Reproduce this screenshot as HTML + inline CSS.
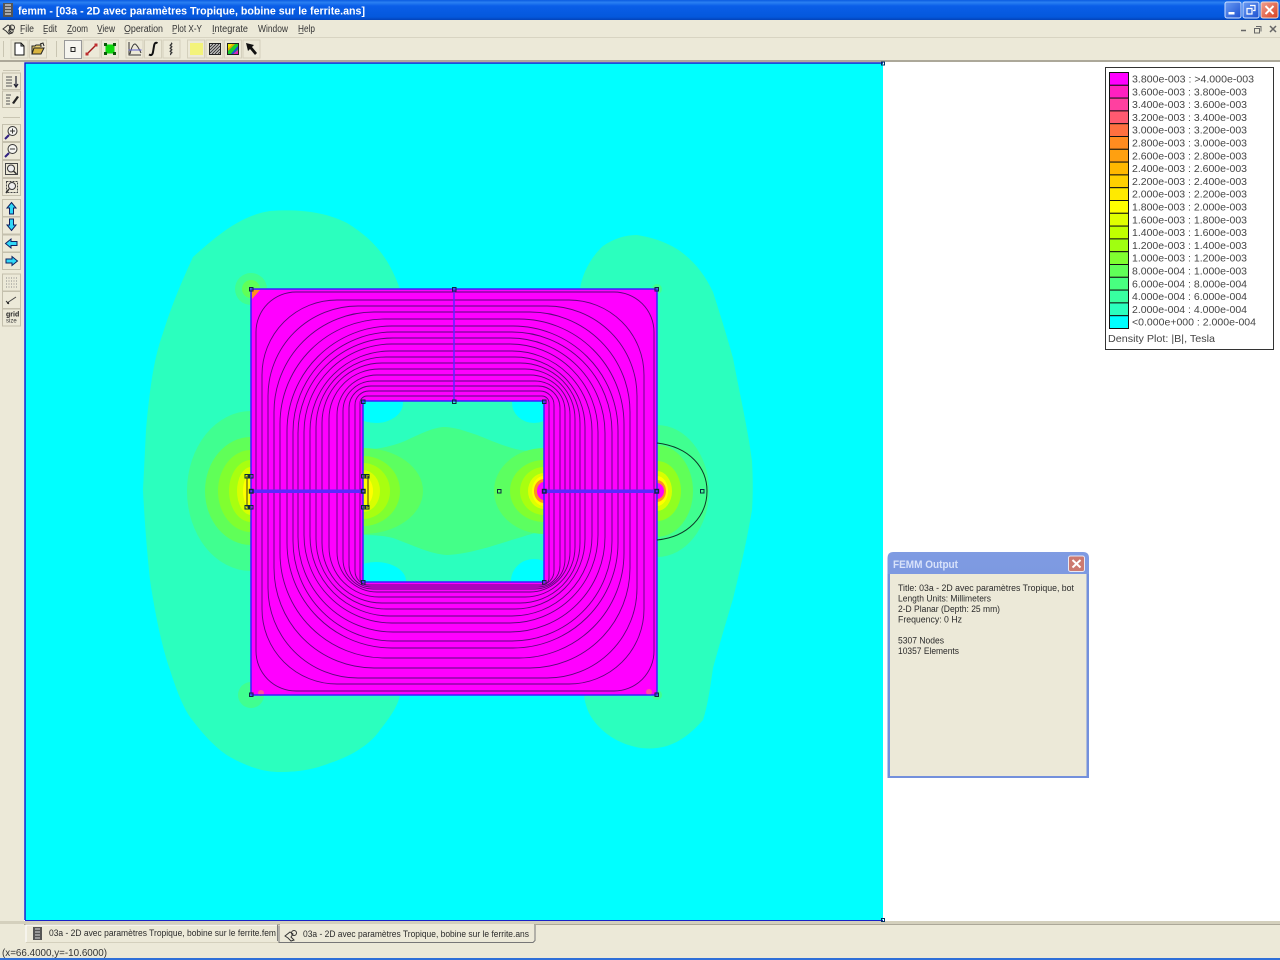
<!DOCTYPE html>
<html><head><meta charset="utf-8"><title>femm</title>
<style>
html,body{margin:0;padding:0;background:#ece9d8;width:1280px;height:960px;overflow:hidden}
svg{display:block;position:absolute;left:0;top:0}
text{font-family:"Liberation Sans",sans-serif;white-space:pre}
.m{font-size:10px;fill:#333}
.l{font-size:10.5px;fill:#444}
.o{font-size:9.6px;fill:#2a2a2a}
.t{font-size:9.6px;fill:#2a2a2a}
.b{fill:#ece9d8;stroke:#b8b4a2;stroke-width:1}
</style></head><body>
<svg width="1280" height="960" viewBox="0 0 1280 960" xmlns="http://www.w3.org/2000/svg">
<defs>
<linearGradient id="tb" x1="0" y1="0" x2="0" y2="1"><stop offset="0" stop-color="#0a5be0"/><stop offset=".12" stop-color="#2a80f2"/><stop offset=".3" stop-color="#0a5ee8"/><stop offset=".85" stop-color="#0458dc"/><stop offset="1" stop-color="#0342b8"/></linearGradient>
<linearGradient id="ot" x1="0" y1="0" x2="0" y2="1"><stop offset="0" stop-color="#7f9be2"/><stop offset=".5" stop-color="#7390dc"/><stop offset="1" stop-color="#6a86d4"/></linearGradient>
<linearGradient id="rd" x1="0" y1="0" x2="1" y2="1"><stop offset="0" stop-color="#f0a090"/><stop offset="1" stop-color="#d84020"/></linearGradient>
<linearGradient id="bl" x1="0" y1="0" x2="1" y2="1"><stop offset="0" stop-color="#6a9cf4"/><stop offset="1" stop-color="#1c50d0"/></linearGradient>
<clipPath id="view"><rect x="25" y="63" width="858" height="857"/></clipPath>
<clipPath id="win"><rect x="363" y="401" width="181" height="181"/></clipPath>
</defs>

<!-- Title bar -->
<rect x="0" y="0" width="1280" height="20" fill="url(#tb)"/>
<rect x="3" y="3" width="10" height="14" fill="#555"/>
<path d="M5 5h6M5 8h6M5 11h6M5 14h6" stroke="#ddd" stroke-width="1.2"/>
<text x="18" y="14.500" font-size="11" font-weight="700" fill="#fff" textLength="347" lengthAdjust="spacingAndGlyphs">femm - [03a - 2D avec paramètres Tropique, bobine sur le ferrite.ans]</text>
<rect x="1225" y="2" width="16" height="16" rx="2" fill="url(#bl)" stroke="#cfe0ff"/>
<rect x="1228.500" y="12" width="6" height="2.500" fill="#fff"/>
<rect x="1243" y="2" width="16" height="16" rx="2" fill="url(#bl)" stroke="#cfe0ff"/>
<path d="M1250 5.500h5v5h-2M1247 8.500h5v5.500h-5z" fill="none" stroke="#fff" stroke-width="1.2"/>
<rect x="1261" y="2" width="17" height="16" rx="2" fill="url(#rd)" stroke="#f4d8cc"/>
<path d="M1265.500 6l8 8M1273.500 6l-8 8" stroke="#fff" stroke-width="2"/>

<!-- Menu bar -->
<rect x="0" y="20" width="1280" height="17" fill="#ece9d8"/>
<rect x="0" y="37" width="1280" height="1" fill="#d8d4c2"/>
<g fill="none" stroke="#333" stroke-width="1">
<path d="M3 29l5-4 3 2-2 3 3 3-3 1-3-3z"/><circle cx="12" cy="27.500" r="2.500"/><circle cx="11" cy="31" r="2.200"/>
</g>
<text class="m" x="20" y="32" textLength="14" lengthAdjust="spacingAndGlyphs">File</text>
<text class="m" x="43" y="32" textLength="14" lengthAdjust="spacingAndGlyphs">Edit</text>
<text class="m" x="67" y="32" textLength="21" lengthAdjust="spacingAndGlyphs">Zoom</text>
<text class="m" x="97" y="32" textLength="18" lengthAdjust="spacingAndGlyphs">View</text>
<text class="m" x="124" y="32" textLength="39" lengthAdjust="spacingAndGlyphs">Operation</text>
<text class="m" x="172" y="32" textLength="30" lengthAdjust="spacingAndGlyphs">Plot X-Y</text>
<text class="m" x="212" y="32" textLength="36" lengthAdjust="spacingAndGlyphs">Integrate</text>
<text class="m" x="258" y="32" textLength="30" lengthAdjust="spacingAndGlyphs">Window</text>
<text class="m" x="298" y="32" textLength="17" lengthAdjust="spacingAndGlyphs">Help</text>
<path d="M20.500 33.500h3M43.500 33.500h3M67.500 33.500h5M97.500 33.500h5M124.500 33.500h5M172.500 33.500h4M212.500 33.500h2M298.500 33.500h5" stroke="#444" stroke-width=".8"/>
<path d="M1241 30.500h5" stroke="#666" stroke-width="1.500"/>
<path d="M1256 26.500h5v5M1254.500 28.500h5v4.500h-5z" fill="none" stroke="#666"/>
<path d="M1270 26l6 6M1276 26l-6 6" stroke="#666" stroke-width="1.500"/>

<!-- Toolbar -->
<rect x="0" y="38" width="1280" height="22" fill="#ece9d8"/>
<rect x="0" y="60" width="1280" height="2" fill="#aca899"/>
<path d="M3.500 41v16M56.500 41v16" stroke="#c9c5b2"/>
<g>
<rect x="11" y="40" width="17" height="18" class="b" style="stroke:#d4d0bd"/>
<path d="M15 43h6l3 3v9h-9z" fill="#fff" stroke="#111"/><path d="M21 43v3h3" fill="none" stroke="#111"/>
<rect x="29.500" y="40" width="17" height="18" class="b" style="stroke:#d4d0bd"/>
<path d="M32 54v-8h3l1-1h5v2" fill="#e8d070" stroke="#222"/><path d="M32 54l2-6h10l-3 6z" fill="#d8b440" stroke="#222"/><path d="M40 44l3-1 1 3" fill="none" stroke="#222"/>
<rect x="64.500" y="40.500" width="17" height="18" fill="#f5f4ee" stroke="#999"/>
<rect x="71" y="47.500" width="4" height="4" fill="none" stroke="#222"/>
<rect x="83" y="40" width="17" height="18" class="b" style="stroke:#d4d0bd"/>
<path d="M87 54l9-9" stroke="#a01818" stroke-width="1.400"/><rect x="85.500" y="52.500" width="3" height="3" fill="#c03030"/><rect x="94.500" y="43.500" width="3" height="3" fill="#c03030"/>
<rect x="101.500" y="40" width="17" height="18" class="b" style="stroke:#d4d0bd"/>
<rect x="105.500" y="44.500" width="9" height="9" fill="#10d810"/>
<path d="M104 43h3v3h-3zM113 43h3v3h-3zM104 52h3v3h-3zM113 52h3v3h-3z" fill="#0b5a0b"/>
<rect x="126" y="40" width="17" height="18" class="b" style="stroke:#d4d0bd"/>
<path d="M129 42v13h12M130 54c2-9 4-10 5-10s4 4 6 9" fill="none" stroke="#333"/>
<path d="M128.500 50h13" stroke="#6060d0"/>
<rect x="144.500" y="40" width="17" height="18" class="b" style="stroke:#d4d0bd"/>
<path d="M149 54.500c2 1.200 3.500.5 4-2.500l1.200-7c.4-2 1.600-2.800 3.300-1.800" fill="none" stroke="#111" stroke-width="2"/>
<rect x="163" y="40" width="17" height="18" class="b" style="stroke:#d4d0bd"/>
<path d="M171 43c3 1-3 2 0 3s-3 2 0 3 -3 2 0 3 -2 1 0 3" fill="none" stroke="#333" stroke-width="1.200"/>
<rect x="187.500" y="40" width="17" height="18" class="b" style="stroke:#d4d0bd"/>
<rect x="190" y="43" width="13" height="12" fill="#f3f37a"/>
<rect x="206" y="40" width="17" height="18" class="b" style="stroke:#d4d0bd"/>
<rect x="209.500" y="43.500" width="11" height="11" fill="#ccc" stroke="#222"/>
<path d="M210 47l3-3M210 50l6-6M210 53l9-9M212 54l8-8M215 54l5-5M218 54l2-2" stroke="#333" stroke-width=".9"/>
<rect x="224.500" y="40" width="17" height="18" class="b" style="stroke:#d4d0bd"/>
<rect x="227.500" y="43.500" width="11" height="11" fill="#18d030" stroke="#222"/>
<path d="M228 44h5l-5 5z" fill="#e8e800"/><path d="M228 49l5-5 2 0-7 7z" fill="#f0a000"/><path d="M238 50v4h-5z" fill="#e020c0"/><path d="M238 46v3l-5 5h-2z" fill="#2040e0"/>
<rect x="243" y="40" width="17" height="18" class="b" style="stroke:#d4d0bd"/>
<path d="M246 43l8 2-2 2 5 6-2 2-5-6-2 2z" fill="#111"/>
</g>

<!-- Left toolbar -->
<rect x="0" y="62" width="24" height="860" fill="#ece9d8"/>
<path d="M3 70.500h17M3 117.500h17" stroke="#c9c5b2"/>
<g>
<rect x="2.500" y="73" width="18" height="16.500" class="b" style="stroke:#c4c0ad"/>
<path d="M6 77h6M6 80h6M6 83h6M6 86h6" stroke="#555"/><path d="M16 76v10M14 84l2 3 2-3" fill="none" stroke="#223" stroke-width="1.200"/>
<rect x="2.500" y="91" width="18" height="16.500" class="b" style="stroke:#c4c0ad"/>
<path d="M6 95h5M6 98h4M6 101h4M6 104h4" stroke="#555"/><path d="M12 103l5-7 2 1-5 7z" fill="#222"/>
<rect x="2.500" y="124.500" width="18" height="17" class="b" style="stroke:#c4c0ad"/>
<circle cx="12.500" cy="131" r="4.500" fill="#f4f4f0" stroke="#333"/><path d="M10 131h5M12.500 128.500v5" stroke="#333"/><path d="M9 135l-4 4" stroke="#302080" stroke-width="2"/>
<rect x="2.500" y="142.500" width="18" height="17" class="b" style="stroke:#c4c0ad"/>
<circle cx="12.500" cy="149" r="4.500" fill="#f4f4f0" stroke="#333"/><path d="M10 149h5" stroke="#333"/><path d="M9 153l-4 4" stroke="#302080" stroke-width="2"/>
<rect x="2.500" y="160.500" width="18" height="17" class="b" style="stroke:#c4c0ad"/>
<rect x="5.500" y="163.500" width="12" height="11" fill="none" stroke="#444"/><circle cx="11" cy="168.500" r="3.500" fill="#eee" stroke="#333"/><path d="M13.500 171l3 3" stroke="#333" stroke-width="1.500"/>
<rect x="2.500" y="178.500" width="18" height="17" class="b" style="stroke:#c4c0ad"/>
<rect x="6.500" y="181.500" width="11" height="11" fill="none" stroke="#444" stroke-dasharray="2 1"/><circle cx="12" cy="186" r="3.500" fill="#eee" stroke="#333"/><path d="M9 189l-3 4" stroke="#333" stroke-width="1.500"/>
<rect x="2.500" y="199.500" width="18" height="17" class="b" style="stroke:#c4c0ad"/>
<path d="M11.500 202.500l4.500 5.500h-2.500v6h-4v-6h-2.500z" fill="#30d8f8" stroke="#102060"/>
<rect x="2.500" y="217" width="18" height="17" class="b" style="stroke:#c4c0ad"/>
<path d="M11.500 230.500l4.500-5.500h-2.500v-6h-4v6h-2.500z" fill="#30d8f8" stroke="#102060"/>
<rect x="2.500" y="235" width="18" height="17" class="b" style="stroke:#c4c0ad"/>
<path d="M5.500 243.500l5.500-4.500v2.500h6v4h-6v2.500z" fill="#30d8f8" stroke="#102060"/>
<rect x="2.500" y="252.500" width="18" height="17" class="b" style="stroke:#c4c0ad"/>
<path d="M17.500 261l-5.500-4.500v2.500h-6v4h6v2.500z" fill="#30d8f8" stroke="#102060"/>
<rect x="2.500" y="274" width="18" height="17" class="b" style="stroke:#c4c0ad"/>
<path d="M6 278h12M6 281h12M6 284h12M6 287h12" stroke="#8a8a8a" stroke-dasharray="1 1.500"/>
<rect x="2.500" y="291.500" width="18" height="17" class="b" style="stroke:#c4c0ad"/>
<path d="M7 303l9-6" stroke="#444"/><path d="M6 301l3 3" stroke="#333"/><circle cx="8" cy="303" r="1" fill="#222"/>
<rect x="2.500" y="309" width="18" height="17" class="b" style="stroke:#c4c0ad"/>
<text x="6" y="316.500" font-size="7" font-weight="700" fill="#222">grid</text>
<text x="6" y="322.500" font-size="6" fill="#333">size</text>
</g>

<!-- White document area -->
<rect x="24" y="62" width="1256" height="859" fill="#fff"/>
<rect x="0" y="921" width="1280" height="3" fill="#d4d0bd"/>

<!-- Field plot -->
<g clip-path="url(#view)">
<rect x="25" y="63" width="858" height="857" fill="#00ffff"/>
<path d="M400 289C390 262 378 242 347 223C325 212 300 209 270 211C245 215 225 228 193 257C180 285 170 310 163 333C155 355 150 383 146 430L143 490C145 530 148 560 150 580C156 620 163 650 170 670C178 695 184 708 190 717C205 737 218 750 230 757C250 768 265 772 280 772C300 772 315 769 330 763C355 755 372 742 380 730C392 715 398 705 400 695Z" fill="#2bffbe"/>
<path d="M580 289C582 275 590 258 603 246C615 238 626 235 637 235C655 238 668 243 680 251C695 262 705 275 713 292C722 320 728 340 733 358C740 395 748 430 752 461C753 480 753 495 752 510C746 545 740 570 733 599C725 625 718 650 713 668C710 690 707 708 703 720C690 735 675 746 657 748C640 750 625 745 613 738C600 730 590 718 587 708C584 700 583 690 583 680Z" fill="#2bffbe"/>
<ellipse cx="251" cy="491" rx="64" ry="80" fill="#40ff90"/>
<ellipse cx="251" cy="491" rx="46" ry="54" fill="#60ff58"/>
<ellipse cx="251" cy="491" rx="33" ry="41" fill="#80ff30"/>
<ellipse cx="251" cy="491" rx="22" ry="31" fill="#a8ff10"/>
<ellipse cx="251" cy="491" rx="14" ry="24" fill="#d8ff00"/>
<ellipse cx="251" cy="491" rx="8" ry="17" fill="#ffff00"/>
<circle cx="251" cy="289" r="16" fill="#40ff90"/><circle cx="251" cy="289" r="9" fill="#60ff58"/>
<circle cx="251" cy="695" r="13" fill="#40ff90"/>
<circle cx="657" cy="695" r="5" fill="#40ff90"/>
<circle cx="657" cy="289" r="5" fill="#40ff90"/>
<ellipse cx="657" cy="491" rx="52" ry="66" fill="#40ff90"/>
<ellipse cx="657" cy="491" rx="36" ry="46" fill="#60ff58"/>
<ellipse cx="657" cy="491" rx="24" ry="30" fill="#90ff20"/>
<ellipse cx="657" cy="491" rx="15" ry="20" fill="#d8ff00"/>
<ellipse cx="657" cy="491" rx="11" ry="15" fill="#ffff00"/>
<ellipse cx="657" cy="491" rx="9" ry="11" fill="#ff9020"/>
<ellipse cx="657" cy="491" rx="7" ry="8" fill="#ff00ff"/>
<rect x="251" y="289" width="406" height="406" fill="#ff00ff"/>
<path d="M252 290h8l-8 9z" fill="#ff9020"/>
<circle cx="261" cy="693" r="3" fill="#ff50a0"/>
<circle cx="649" cy="692" r="3" fill="#ff50a0"/>
<g clip-path="url(#win)">
<rect x="363" y="401" width="181" height="181" fill="#2bffbe"/>
<ellipse cx="376" cy="403" rx="27" ry="20" fill="#00ffff"/>
<ellipse cx="534" cy="403" rx="22" ry="20" fill="#00ffff"/>
<ellipse cx="376" cy="581" rx="30" ry="19" fill="#00ffff"/>
<ellipse cx="534" cy="581" rx="23" ry="22" fill="#00ffff"/>
<path d="M363 450C378 449 390 447 405 441C420 434 432 428 443 427C455 427 465 431 477 435C490 440 505 447 520 450C530 451 538 452 544 452V530C535 533 528 535 515 539C495 545 470 554 447 555C430 554 415 546 393 538C385 536 375 535 363 535Z" fill="#44ff88"/>
<ellipse cx="363" cy="491" rx="60" ry="43" fill="#5cff60"/>
<ellipse cx="363" cy="491" rx="37" ry="35" fill="#80ff30"/>
<ellipse cx="363" cy="491" rx="27" ry="28" fill="#a8ff10"/>
<ellipse cx="363" cy="491" rx="17" ry="21" fill="#d8ff00"/>
<ellipse cx="363" cy="491" rx="10" ry="15" fill="#ffff00"/>
<ellipse cx="544" cy="491" rx="50" ry="43" fill="#5cff60"/>
<ellipse cx="544" cy="491" rx="34" ry="31" fill="#80ff30"/>
<ellipse cx="544" cy="491" rx="24" ry="24" fill="#a8ff10"/>
<ellipse cx="544" cy="491" rx="16" ry="18" fill="#e0ff00"/>
<ellipse cx="544" cy="491" rx="12" ry="15" fill="#ffff00"/>
<ellipse cx="544" cy="491" rx="10" ry="12" fill="#ff9020"/>
<ellipse cx="544" cy="491" rx="7" ry="9" fill="#ff00ff"/>
</g>
<!-- flux lines -->
<g fill="none" stroke="#5a0a78" stroke-width=".9">
<rect x="256" y="292" width="398" height="399" rx="40" ry="40"/>
<rect x="262" y="300" width="382" height="384" rx="75" ry="75"/>
<rect x="268" y="306" width="369" height="372" rx="90" ry="90"/>
<rect x="274" y="312" width="356" height="356" rx="100" ry="100"/>
<rect x="280" y="319" width="344" height="339" rx="105" ry="105"/>
<rect x="287" y="326" width="331" height="322" rx="105" ry="105"/>
<rect x="293" y="332" width="319" height="309" rx="100" ry="100"/>
<rect x="298" y="338" width="307" height="294" rx="95" ry="95"/>
<rect x="304" y="344" width="294" height="279" rx="88" ry="88"/>
<rect x="310" y="351" width="282" height="265" rx="80" ry="80"/>
<rect x="316" y="357" width="269" height="252" rx="70" ry="70"/>
<rect x="322" y="363" width="258" height="240" rx="60" ry="60"/>
<rect x="329" y="369" width="246" height="228" rx="50" ry="50"/>
<rect x="337" y="375" width="233" height="217" rx="40" ry="40"/>
<rect x="343" y="381" width="222" height="208" rx="30" ry="30"/>
<rect x="349" y="386" width="211" height="201" rx="22" ry="22"/>
<rect x="355" y="391" width="199" height="194" rx="14" ry="14"/>
<rect x="360" y="396" width="189" height="189" rx="7" ry="7"/>
</g>
<path d="M251 289H657V695H251Z" fill="none" stroke="#3a20ff" stroke-width="1.500"/>
<path d="M363 401H544V582H363Z" fill="none" stroke="#3a20ff" stroke-width="1.500"/>
<rect x="250" y="489.500" width="113" height="3.500" fill="#5a28ff"/>
<rect x="544" y="489.500" width="113" height="3.500" fill="#5a28ff"/>
<path d="M454 289V401" stroke="#5a28ff" stroke-width="1.500"/>
<path d="M247 476V507M251 476H247M251 507H247M368 476V507M363 476H368M363 507H368" fill="none" stroke="#403c10" stroke-width="1"/>
<path d="M657 443C690 447 707 468 707 491C707 516 688 537 657 540" fill="none" stroke="#0c3a28" stroke-width="1"/>
<g fill="none" stroke="#0a2a40" stroke-width="1">
<rect x="249.500" y="287.500" width="3.500" height="3.500"/><rect x="452.500" y="287.500" width="3.500" height="3.500"/><rect x="655" y="287.500" width="3.500" height="3.500"/>
<rect x="361.500" y="400" width="3.500" height="3.500"/><rect x="452.500" y="400" width="3.500" height="3.500"/><rect x="542.500" y="400" width="3.500" height="3.500"/>
<rect x="361.500" y="580.500" width="3.500" height="3.500"/><rect x="542.500" y="580.500" width="3.500" height="3.500"/>
<rect x="249.500" y="693" width="3.500" height="3.500"/><rect x="655" y="693" width="3.500" height="3.500"/>
<rect x="249.500" y="489.500" width="3.500" height="3.500" stroke-width="1.400"/><rect x="361.500" y="489.500" width="3.500" height="3.500" stroke-width="1.400"/>
<rect x="542.500" y="489.500" width="3.500" height="3.500" stroke-width="1.400"/><rect x="655" y="489.500" width="3.500" height="3.500" stroke-width="1.400"/>
<rect x="497.500" y="489.500" width="3.500" height="3.500"/><rect x="700.500" y="489.500" width="3.500" height="3.500"/>
<rect x="245" y="474.500" width="3.500" height="3.500"/><rect x="249.500" y="474.500" width="3.500" height="3.500"/>
<rect x="245" y="505.500" width="3.500" height="3.500"/><rect x="249.500" y="505.500" width="3.500" height="3.500"/>
<rect x="361.500" y="474.500" width="3.500" height="3.500"/><rect x="365.500" y="474.500" width="3.500" height="3.500"/>
<rect x="361.500" y="505.500" width="3.500" height="3.500"/><rect x="365.500" y="505.500" width="3.500" height="3.500"/>
</g>
</g>
<path d="M25 920V63H883" fill="none" stroke="#1820c8" stroke-width="1.500"/>
<path d="M25 920.500H883" stroke="#1820c8" stroke-width="1"/>
<rect x="881.500" y="62" width="3" height="3" fill="none" stroke="#003060"/>
<rect x="881.500" y="918.500" width="3" height="3" fill="none" stroke="#003060"/>

<!-- Legend -->
<rect x="1105.500" y="67.500" width="168" height="282" fill="#fff" stroke="#333"/>
<g stroke="#111" stroke-width="1">
<rect x="1109.500" y="72.500" width="19" height="12.800" fill="#ff00ff"/>
<rect x="1109.500" y="85.300" width="19" height="12.800" fill="#ff20c0"/>
<rect x="1109.500" y="98.100" width="19" height="12.800" fill="#ff40a0"/>
<rect x="1109.500" y="110.900" width="19" height="12.800" fill="#ff5a70"/>
<rect x="1109.500" y="123.700" width="19" height="12.800" fill="#ff7040"/>
<rect x="1109.500" y="136.500" width="19" height="12.800" fill="#ff8c20"/>
<rect x="1109.500" y="149.300" width="19" height="12.800" fill="#ffa010"/>
<rect x="1109.500" y="162.100" width="19" height="12.800" fill="#ffb800"/>
<rect x="1109.500" y="174.900" width="19" height="12.800" fill="#ffd000"/>
<rect x="1109.500" y="187.700" width="19" height="12.800" fill="#ffea00"/>
<rect x="1109.500" y="200.500" width="19" height="12.800" fill="#ffff00"/>
<rect x="1109.500" y="213.300" width="19" height="12.800" fill="#e0ff00"/>
<rect x="1109.500" y="226.100" width="19" height="12.800" fill="#c0ff00"/>
<rect x="1109.500" y="238.900" width="19" height="12.800" fill="#a0ff10"/>
<rect x="1109.500" y="251.700" width="19" height="12.800" fill="#80ff30"/>
<rect x="1109.500" y="264.500" width="19" height="12.800" fill="#60ff58"/>
<rect x="1109.500" y="277.300" width="19" height="12.800" fill="#48ff80"/>
<rect x="1109.500" y="290.100" width="19" height="12.800" fill="#38ffa0"/>
<rect x="1109.500" y="302.900" width="19" height="12.800" fill="#2bffbe"/>
<rect x="1109.500" y="315.700" width="19" height="12.800" fill="#00ffff"/>
</g>
<text class="l" x="1132" y="82.500" textLength="122" lengthAdjust="spacingAndGlyphs">3.800e-003 : &gt;4.000e-003</text>
<text class="l" x="1132" y="95.300" textLength="115" lengthAdjust="spacingAndGlyphs">3.600e-003 : 3.800e-003</text>
<text class="l" x="1132" y="108.100" textLength="115" lengthAdjust="spacingAndGlyphs">3.400e-003 : 3.600e-003</text>
<text class="l" x="1132" y="120.900" textLength="115" lengthAdjust="spacingAndGlyphs">3.200e-003 : 3.400e-003</text>
<text class="l" x="1132" y="133.700" textLength="115" lengthAdjust="spacingAndGlyphs">3.000e-003 : 3.200e-003</text>
<text class="l" x="1132" y="146.500" textLength="115" lengthAdjust="spacingAndGlyphs">2.800e-003 : 3.000e-003</text>
<text class="l" x="1132" y="159.300" textLength="115" lengthAdjust="spacingAndGlyphs">2.600e-003 : 2.800e-003</text>
<text class="l" x="1132" y="172.100" textLength="115" lengthAdjust="spacingAndGlyphs">2.400e-003 : 2.600e-003</text>
<text class="l" x="1132" y="184.900" textLength="115" lengthAdjust="spacingAndGlyphs">2.200e-003 : 2.400e-003</text>
<text class="l" x="1132" y="197.700" textLength="115" lengthAdjust="spacingAndGlyphs">2.000e-003 : 2.200e-003</text>
<text class="l" x="1132" y="210.500" textLength="115" lengthAdjust="spacingAndGlyphs">1.800e-003 : 2.000e-003</text>
<text class="l" x="1132" y="223.300" textLength="115" lengthAdjust="spacingAndGlyphs">1.600e-003 : 1.800e-003</text>
<text class="l" x="1132" y="236.100" textLength="115" lengthAdjust="spacingAndGlyphs">1.400e-003 : 1.600e-003</text>
<text class="l" x="1132" y="248.900" textLength="115" lengthAdjust="spacingAndGlyphs">1.200e-003 : 1.400e-003</text>
<text class="l" x="1132" y="261.700" textLength="115" lengthAdjust="spacingAndGlyphs">1.000e-003 : 1.200e-003</text>
<text class="l" x="1132" y="274.500" textLength="115" lengthAdjust="spacingAndGlyphs">8.000e-004 : 1.000e-003</text>
<text class="l" x="1132" y="287.300" textLength="115" lengthAdjust="spacingAndGlyphs">6.000e-004 : 8.000e-004</text>
<text class="l" x="1132" y="300.100" textLength="115" lengthAdjust="spacingAndGlyphs">4.000e-004 : 6.000e-004</text>
<text class="l" x="1132" y="312.900" textLength="115" lengthAdjust="spacingAndGlyphs">2.000e-004 : 4.000e-004</text>
<text class="l" x="1132" y="325.700" textLength="124" lengthAdjust="spacingAndGlyphs">&lt;0.000e+000 : 2.000e-004</text>
<text class="l" x="1108" y="342" textLength="107" lengthAdjust="spacingAndGlyphs">Density Plot: |B|, Tesla</text>

<!-- Output window -->
<path d="M887.500 778V558q0-6 6-6H1083q6 0 6 6V778Z" fill="url(#ot)"/>
<rect x="890" y="574" width="196.500" height="202" fill="#ece9d8"/>
<rect x="887.500" y="574" width="2.500" height="204" fill="#7390dc"/>
<rect x="1086.500" y="574" width="2.500" height="204" fill="#7390dc"/>
<rect x="887.500" y="776" width="201.500" height="2" fill="#7390dc"/>
<text x="893" y="568" font-size="11" font-weight="700" fill="#d8e2fa" textLength="65" lengthAdjust="spacingAndGlyphs">FEMM Output</text>
<rect x="1068.500" y="556" width="16" height="15.500" rx="2" fill="#cc7a70" stroke="#e8e8f4"/>
<path d="M1072.500 560l8 7.500M1080.500 560l-8 7.500" stroke="#fff" stroke-width="2"/>
<text class="o" x="898" y="591" textLength="176" lengthAdjust="spacingAndGlyphs">Title: 03a - 2D avec paramètres Tropique, bot</text>
<text class="o" x="898" y="601.500" textLength="93" lengthAdjust="spacingAndGlyphs">Length Units: Millimeters</text>
<text class="o" x="898" y="612" textLength="102" lengthAdjust="spacingAndGlyphs">2-D Planar (Depth: 25 mm)</text>
<text class="o" x="898" y="622.500" textLength="64" lengthAdjust="spacingAndGlyphs">Frequency: 0 Hz</text>
<text class="o" x="898" y="643.500" textLength="46" lengthAdjust="spacingAndGlyphs">5307 Nodes</text>
<text class="o" x="898" y="654" textLength="61" lengthAdjust="spacingAndGlyphs">10357 Elements</text>

<!-- Tab bar -->
<rect x="0" y="924" width="1280" height="20" fill="#ece9d8"/>
<path d="M24 924.500H1280" stroke="#aca899"/>
<path d="M26 942V925H277" fill="none" stroke="#fff"/>
<path d="M277.500 925V941" stroke="#808080"/>
<path d="M26 942.500H279" stroke="#d4d0bd"/>
<rect x="33" y="927" width="9" height="13" fill="#555"/>
<path d="M35 929h5M35 932h5M35 935h5M35 938h5" stroke="#ddd"/>
<text class="t" x="49" y="936" textLength="227" lengthAdjust="spacingAndGlyphs">03a - 2D avec paramètres Tropique, bobine sur le ferrite.fem</text>
<path d="M279 925.500V942.500H533l2-2V925" fill="#ece9d8" stroke="#777"/>
<path d="M280 925H534" stroke="#ece9d8" stroke-width="2"/>
<g fill="none" stroke="#333"><path d="M285 936l5-4 3 2-2 3 3 3-3 1-3-3z"/><circle cx="294" cy="933" r="2.500"/></g>
<text class="t" x="303" y="937" textLength="226" lengthAdjust="spacingAndGlyphs">03a - 2D avec paramètres Tropique, bobine sur le ferrite.ans</text>

<!-- Status bar -->
<rect x="0" y="944" width="1280" height="14" fill="#ece9d8"/>
<text x="2" y="956" font-size="10.500" fill="#333" textLength="105" lengthAdjust="spacingAndGlyphs">(x=66.4000,y=-10.6000)</text>
<rect x="0" y="958" width="1280" height="2" fill="#2f6fd8"/>
</svg>
</body></html>
